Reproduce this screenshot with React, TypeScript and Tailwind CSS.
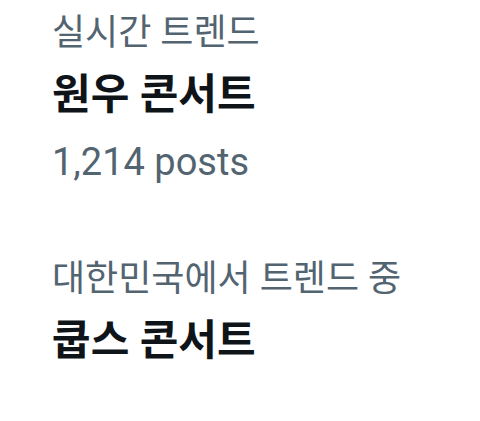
const gray = "text-[#536471]";

function Trend({ label, title, count }: { label: string; title: string; count?: string }) {
  return (
    <div className="flex flex-col">
      <div className={`text-[36px] leading-[62px] ${gray}`}>{label}</div>
      <div className="text-[42px] leading-[62px] font-bold text-[#0f1419]">{title}</div>
      {count && <div className={`text-[38px] leading-[72px] ${gray}`}>{count}</div>}
    </div>
  );
}

export default function App() {
  return (
    <div
      className="w-[480px] h-[421px] bg-white pl-[52px] pt-[2px] flex flex-col gap-[50px] overflow-hidden"
      style={{ fontFamily: '"Roboto", "Noto Sans CJK KR", sans-serif' }}
    >
      <Trend label="실시간 트렌드" title="원우 콘서트" count="1,214 posts" />
      <Trend label="대한민국에서 트렌드 중" title="쿱스 콘서트" />
    </div>
  );
}
